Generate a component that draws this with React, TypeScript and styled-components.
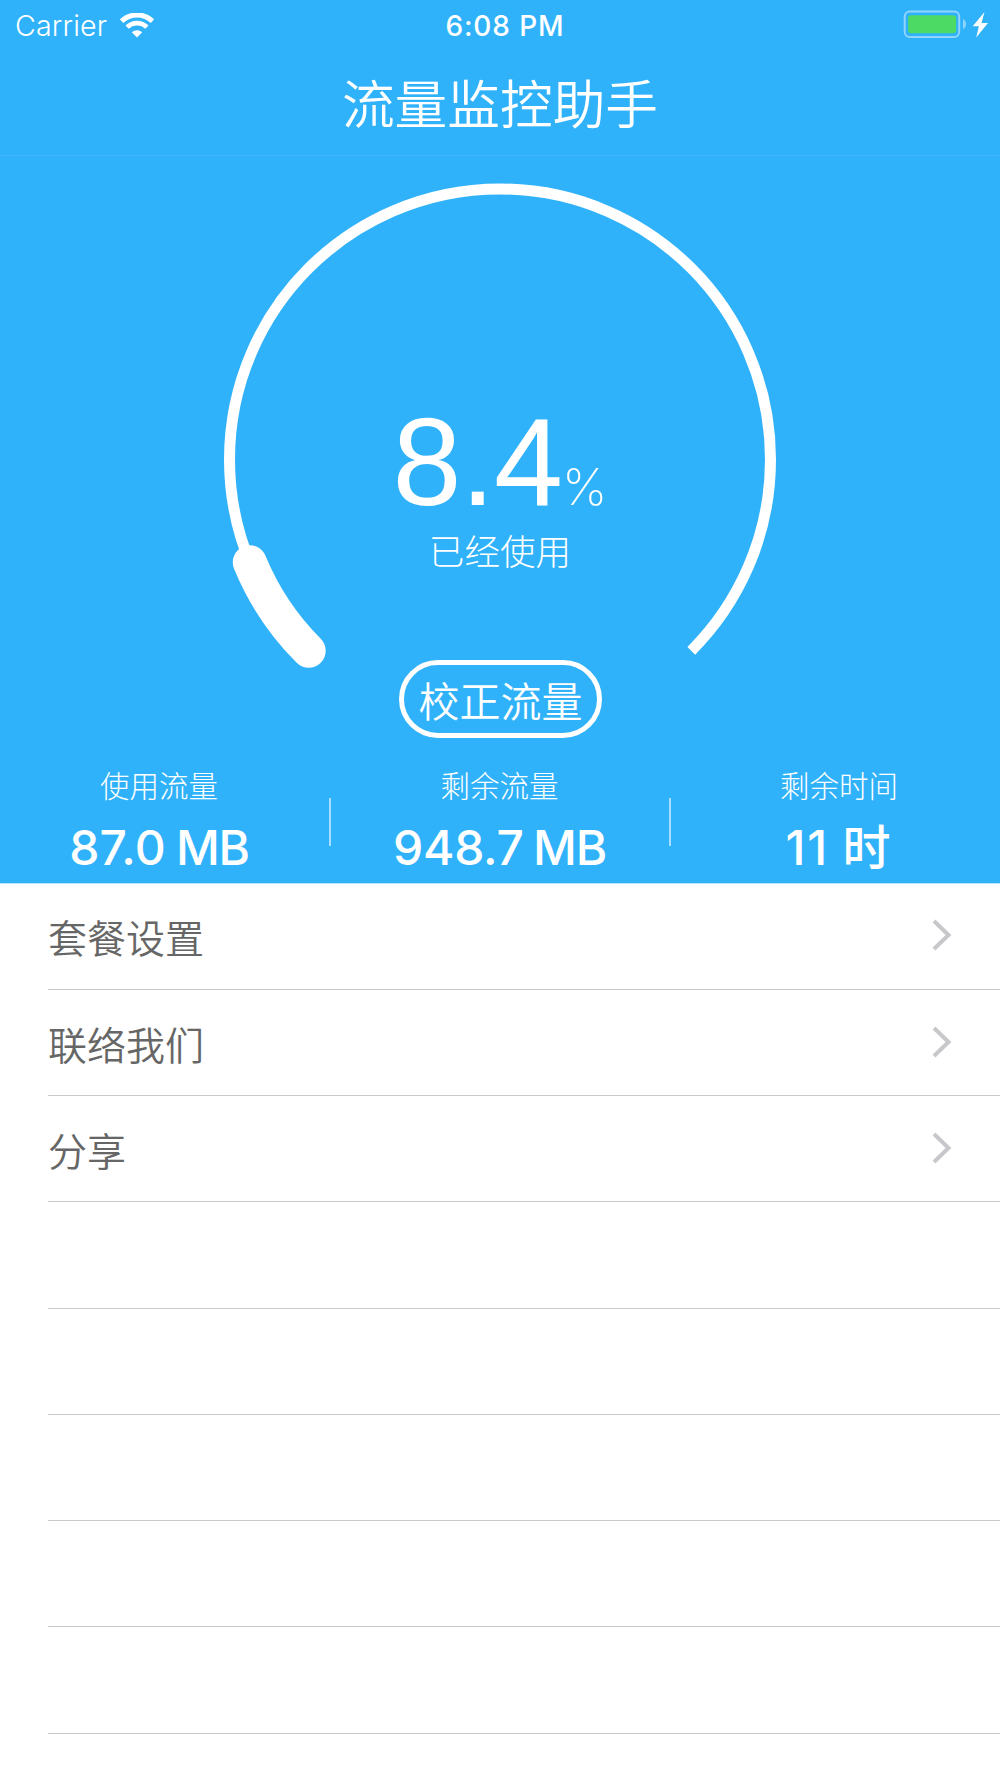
import React from "react";
import styled, { createGlobalStyle } from "styled-components";

const BLUE = "#30b2fa";

const GlobalStyle = createGlobalStyle`
  body {
    margin: 0;
    background: #fff;
    font-family: Inter, "Noto Sans CJK SC", sans-serif;
  }
`;

const Screen = styled.main`
  width: 1000px;
  height: 1778px;
  overflow: hidden;
  background: #fff;
`;

const Header = styled.header`
  display: flex;
  flex-direction: column;
  height: 883.8px;
  background: ${BLUE};
  color: #fff;
  border-bottom: 1px solid #b8e3fd;
  box-sizing: border-box;
`;

const StatusBar = styled.div`
  display: grid;
  grid-template-columns: 1fr auto 1fr;
  height: 50px;
  padding: 0 12px 0 15px;
  line-height: 52px;
`;

const StatusGroup = styled.div<{ $end?: boolean }>`
  display: flex;
  align-items: flex-start;
  justify-content: ${(p) => (p.$end ? "flex-end" : "flex-start")};
`;

const Carrier = styled.span`
  font-size: 28.6px;
  font-weight: 300;
  letter-spacing: 0.15px;
`;

const Clock = styled.span`
  font-size: 28px;
  font-weight: 500;
  letter-spacing: 0.9px;
  padding-left: 7px;
`;

const WifiIcon = styled.svg`
  margin: 12.5px 0 0 13px;
`;

const BatteryIcon = styled.svg`
  margin-top: 9px;
`;

const TitleBar = styled.div`
  height: 105px;
  box-sizing: content-box;
  border-bottom: 1px solid #3fb6fa;
  text-align: center;
`;

const Title = styled.h1`
  margin: 0;
  font-family: "Noto Sans CJK SC", sans-serif;
  font-size: 52.7px;
  font-weight: 350;
  line-height: 103px;
`;

const Gauge = styled.section`
  display: grid;
  justify-items: center;
  height: 608px;
`;

const Dial = styled.svg`
  grid-area: 1 / 1;
`;

const Reading = styled.div`
  grid-area: 1 / 1;
  display: flex;
  flex-direction: column;
  align-items: center;
  padding-top: 243px;
`;

const Percent = styled.div`
  display: flex;
  align-items: baseline;
  height: 125px;
  line-height: 126px;
  font-family: "Liberation Sans", Arial, sans-serif;
  font-size: 124px;
  letter-spacing: -1px;
`;

const PercentSign = styled.span`
  font-family: Inter, sans-serif;
  font-size: 51px;
  font-weight: 200;
  letter-spacing: 0;
`;

const Caption = styled.div`
  font-family: "Noto Sans CJK SC", sans-serif;
  font-size: 35.6px;
  font-weight: 300;
  line-height: 52px;
`;

const AdjustButton = styled.button`
  box-sizing: border-box;
  width: 203px;
  height: 78px;
  margin: 84px 0 0 1px;
  padding: 0;
  border: 5px solid #fff;
  border-radius: 39px;
  background: transparent;
  color: #fff;
  font-family: "Noto Sans CJK SC", sans-serif;
  font-size: 41px;
  font-weight: 350;
  line-height: 62px;
`;

const Stats = styled.section`
  display: grid;
  grid-template-columns: 329px 2px 338px 2px 329px;
`;

const Stat = styled.div<{ $shift?: number }>`
  display: flex;
  flex-direction: column;
  align-items: center;
  margin-left: ${(p) => p.$shift ?? 0}px;
  margin-right: ${(p) => -(p.$shift ?? 0)}px;
`;

const StatLabel = styled.span`
  font-family: "Noto Sans CJK SC", sans-serif;
  font-size: 29.5px;
  font-weight: 300;
  line-height: 40px;
`;

const StatValue = styled.span<{ $spacing?: number; $gap?: number }>`
  font-size: 48px;
  font-weight: 500;
  line-height: 58px;
  margin-top: 15px;
  letter-spacing: ${(p) => p.$spacing ?? 0}px;
  word-spacing: ${(p) => p.$gap ?? -3}px;
  white-space: nowrap;
`;

const Unit = styled.span`
  letter-spacing: -1.2px;
`;

const Divider = styled.i`
  height: 48px;
  margin-top: 34px;
  background: #a6defd;
`;

const List = styled.ul`
  margin: 0;
  padding: 0;
  list-style: none;
`;

const Row = styled.li`
  display: flex;
  align-items: center;
  justify-content: space-between;
  box-sizing: border-box;
  height: 106.23px;
  margin-left: 48px;
  padding-right: 48px;
  border-bottom: 1px solid #c9c8cc;
`;

const RowLabel = styled.span`
  font-family: "Noto Sans CJK SC", sans-serif;
  font-size: 39px;
  font-weight: 350;
  color: #666;
  line-height: 58px;
`;

const Chevron = styled.svg`
  margin-bottom: 2px;
`;

const rows = ["套餐设置", "联络我们", "分享", "", "", "", "", "", ""];

const RADIUS = 270.5;
const CENTER = { x: 300, y: 303.5 };
const USED = 8.4;

function arc(fromDeg: number, toDeg: number) {
  const at = (deg: number) => {
    const rad = (deg * Math.PI) / 180;
    return `${CENTER.x + RADIUS * Math.cos(rad)} ${CENTER.y + RADIUS * Math.sin(rad)}`;
  };
  return `M${at(fromDeg)}A${RADIUS} ${RADIUS} 0 ${toDeg - fromDeg > 180 ? 1 : 0} 1 ${at(toDeg)}`;
}

export default function App() {
  return (
    <Screen>
      <GlobalStyle />
      <Header>
        <StatusBar>
          <StatusGroup>
            <Carrier>Carrier</Carrier>
            <WifiIcon width="34" height="25" viewBox="0 0 34 25" fill="none" stroke="#fff">
              <path d="M1.6 8.2a22 22 0 0 1 30.8 0" strokeWidth="5" />
              <path d="M7.1 14.2a14 14 0 0 1 19.8 0" strokeWidth="4.6" />
              <path d="M11.8 19.3a7.5 7.5 0 0 1 10.4 0L17 24.5z" fill="#fff" stroke="none" />
            </WifiIcon>
          </StatusGroup>
          <Clock>6:08 PM</Clock>
          <StatusGroup $end>
            <BatteryIcon width="86" height="32" viewBox="0 0 86 32">
              <rect x="2.7" y="2.5" width="54.5" height="25.4" rx="5" fill="none" stroke="#8fd4fd" strokeWidth="2" />
              <rect x="6.2" y="6.2" width="48" height="18" rx="3" fill="#4cd964" />
              <path d="M61 10q3 1.5 3 5t-3 5z" fill="#8fd4fd" />
              <path d="M82.5 3L70.7 17.2h6.2L74.2 28.5 86 14h-6.5z" fill="#fff" />
            </BatteryIcon>
          </StatusGroup>
        </StatusBar>
        <TitleBar>
          <Title>流量监控助手</Title>
        </TitleBar>
        <Gauge>
          <Dial width="600" height="530" viewBox="0 0 600 530" fill="none" stroke="#fff">
            <path d={arc(135, 405)} strokeWidth="11" />
            <path d={arc(135, 135 + (270 * USED) / 100)} strokeWidth="34" strokeLinecap="round" />
          </Dial>
          <Reading>
            <Percent>
              8.4<PercentSign>%</PercentSign>
            </Percent>
            <Caption>已经使用</Caption>
            <AdjustButton>校正流量</AdjustButton>
          </Reading>
        </Gauge>
        <Stats>
          <Stat $shift={-5.5}>
            <StatLabel>使用流量</StatLabel>
            <StatValue $spacing={0.2}>
              87.0 <Unit>MB</Unit>
            </StatValue>
          </Stat>
          <Divider />
          <Stat $shift={-0.5}>
            <StatLabel>剩余流量</StatLabel>
            <StatValue $spacing={-0.3}>
              948.7 <Unit>MB</Unit>
            </StatValue>
          </Stat>
          <Divider />
          <Stat $shift={3.5}>
            <StatLabel>剩余时间</StatLabel>
            <StatValue $spacing={1.8} $gap={-1}>
              11 时
            </StatValue>
          </Stat>
        </Stats>
      </Header>
      <List>
        {rows.map((label, i) => (
          <Row key={i}>
            <RowLabel>{label}</RowLabel>
            {label && (
              <Chevron width="20" height="32" viewBox="0 0 20 32" fill="none" stroke="#c7c7cc" strokeWidth="4">
                <path d="M2 2L16.5 16 2 30" />
              </Chevron>
            )}
          </Row>
        ))}
      </List>
    </Screen>
  );
}
